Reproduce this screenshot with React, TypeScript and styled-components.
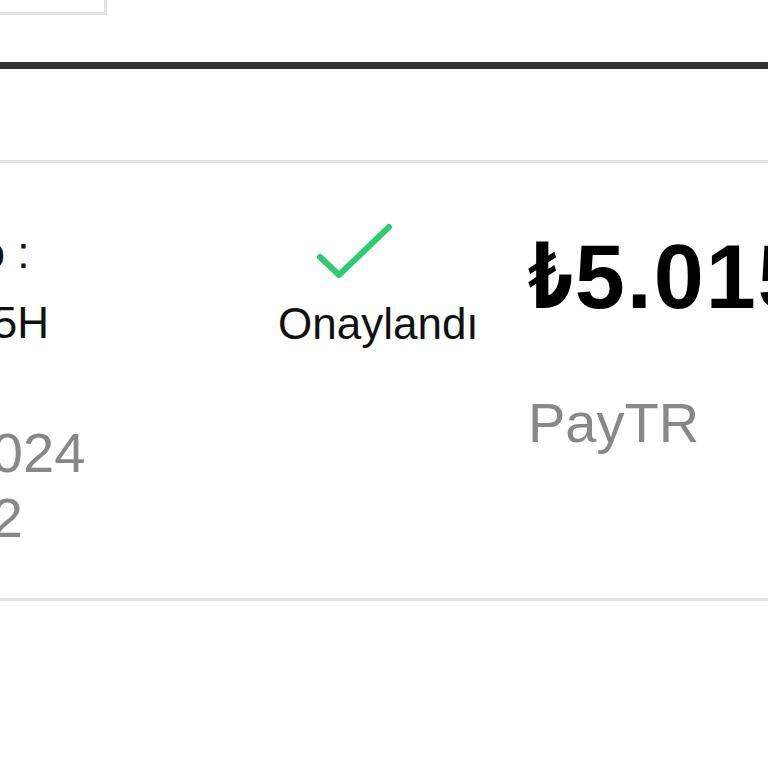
import React from "react";
import styled, { createGlobalStyle } from "styled-components";

const GlobalStyle = createGlobalStyle`
  html, body {
    margin: 0;
    padding: 0;
    background: #ffffff;
    font-family: "Liberation Sans", Arial, "DejaVu Sans", sans-serif;
  }
`;

const Page = styled.div`
  width: 768px;
  height: 768px;
  overflow: hidden;
  background: #ffffff;
  display: flex;
  flex-direction: column;
`;

const TopBox = styled.div`
  width: 107px;
  height: 15px;
  box-sizing: border-box;
  border-right: 3px solid #e3e3e3;
  border-bottom: 3px solid #e3e3e3;
`;

const HeaderRule = styled.div`
  margin-top: 47px;
  height: 7px;
  background: #333333;
`;

const Card = styled.div`
  margin-top: 91px;
  margin-left: -198px;
  height: 441px;
  box-sizing: border-box;
  border-top: 3px solid #e3e3e3;
  border-bottom: 3px solid #e3e3e3;
  display: flex;
  align-items: flex-start;
`;

const InfoCol = styled.div`
  width: 476px;
  flex: none;
  padding-top: 55px;
  display: flex;
  flex-direction: column;
`;

const Label = styled.div`
  font-size: 44px;
  line-height: 70px;
  color: #111111;
  white-space: nowrap;
`;

const DateBlock = styled.div`
  margin-top: 62px;
  margin-left: 3px;
  font-size: 56px;
  line-height: 65px;
  color: #888888;
  white-space: nowrap;
`;

const StatusCol = styled.div`
  width: 250px;
  flex: none;
  padding-top: 54px;
  display: flex;
  flex-direction: column;
  align-items: flex-start;
`;

const CheckIcon = styled.svg`
  margin-left: 32px;
  display: block;
`;

const StatusText = styled.div`
  margin-top: 14px;
  font-size: 44px;
  line-height: 50px;
  color: #111111;
  white-space: nowrap;
`;

const AmountCol = styled.div`
  flex: none;
  padding-top: 69px;
  display: flex;
  flex-direction: column;
`;

const Amount = styled.div`
  font-size: 90px;
  line-height: 90px;
  font-weight: 700;
  color: #000000;
  white-space: nowrap;
  letter-spacing: 2px;
`;

const Currency = styled.span`
  display: inline-block;
  transform: scaleX(0.72);
  transform-origin: left center;
  margin-right: -16px;
  letter-spacing: 0;
`;

const Provider = styled.div`
  margin-top: 68px;
  font-size: 56px;
  line-height: 65px;
  color: #888888;
  white-space: nowrap;
`;

export default function App() {
  return (
    <>
      <GlobalStyle />
      <Page>
        <TopBox />
        <HeaderRule />
        <Card>
          <InfoCol>
            <Label>Sipariş No :</Label>
            <Label>ORD-9X25H</Label>
            <DateBlock>
              13.08.2024
              <br />
              14:35:02
            </DateBlock>
          </InfoCol>
          <StatusCol>
            <CheckIcon width="88" height="68" viewBox="0 0 88 68" fill="none">
              <polyline
                points="10,40 29,58 79,10"
                stroke="#2ecc71"
                strokeWidth="6"
                strokeLinecap="round"
                strokeLinejoin="round"
              />
            </CheckIcon>
            <StatusText>Onaylandı</StatusText>
          </StatusCol>
          <AmountCol>
            <Amount>
              <Currency>₺</Currency>5.015,00
            </Amount>
            <Provider>PayTR</Provider>
          </AmountCol>
        </Card>
      </Page>
    </>
  );
}
